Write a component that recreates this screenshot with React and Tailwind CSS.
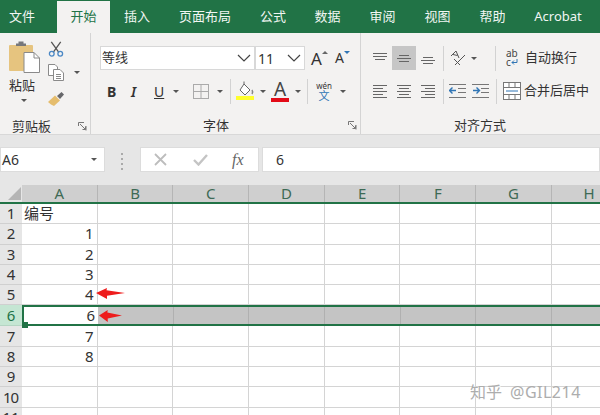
import React from "react";

const tabs = [
  ["文件", "w-[57px] justify-start pl-[9px]"],
  ["开始", "w-[53px] justify-center"],
  ["插入", "w-[54px] justify-center"],
  ["页面布局", "w-[82px] justify-center"],
  ["公式", "w-[54px] justify-center"],
  ["数据", "w-[55px] justify-center"],
  ["审阅", "w-[55px] justify-center"],
  ["视图", "w-[55px] justify-center"],
  ["帮助", "w-[55px] justify-center"],
  ["Acrobat", "w-[76px] justify-center"],
];
const columns = ["A", "B", "C", "D", "E", "F", "G", "H"];
const values = ["编号", "1", "2", "3", "4", "6", "7", "8", "", "", ""];

const Caret = ({ className = "" }) => (
  <span className={`inline-block w-0 h-0 border-x-[3px] border-x-transparent border-t-[3px] border-t-[#555] ${className}`} />
);

const Launcher = () => (
  <svg width="9" height="9" viewBox="0 0 9 9" fill="none" stroke="#777" strokeWidth="1">
    <path d="M8 4V8.500M.5 4V.5H6M2 2L7.500 7.500M4.500 7.500H7.500V4.500" />
  </svg>
);

const Divider = ({ className = "" }) => <div className={`w-px h-[25px] shrink-0 bg-[#d2d2d2] ${className}`} />;

const Lines = ({ rows, color = "#666" }) => (
  <svg width="16" height="16" viewBox="0 0 16 16" stroke={color} strokeWidth="1">
    {rows.map(([x1, x2, y]) => (
      <line key={y} x1={x1} x2={x2} y1={y + 0.5} y2={y + 0.5} />
    ))}
  </svg>
);

const Paste = () => (
  <svg width="33" height="34" viewBox="0 0 33 34">
    <rect x="0" y="4" width="24" height="26" rx="1" fill="#e6c47f" />
    <path d="M7 5V2.500H9.500V0.500H14.500V2.500H17V5Z" fill="#77787b" />
    <path d="M15 11.500H25L30.500 17V31.500H15Z" fill="#fff" stroke="#8a8a8a" />
    <path d="M25 11.500V17H30.500" fill="none" stroke="#8a8a8a" />
  </svg>
);

const Scissors = () => (
  <svg width="16" height="17" viewBox="0 0 16 17" fill="none">
    <path d="M3 1L11 12M13 1L5 12" stroke="#555" strokeWidth="1.400" />
    <circle cx="3.500" cy="13.500" r="2.500" stroke="#4b88c5" strokeWidth="1.400" />
    <circle cx="12.500" cy="13.500" r="2.500" stroke="#4b88c5" strokeWidth="1.400" />
  </svg>
);

const Copy = () => (
  <svg width="16" height="17" viewBox="0 0 16 17" fill="#fff" stroke="#8a8a8a">
    <path d="M.5 .5H7L9.500 3V11.500H.5Z" />
    <path d="M5.500 5.500H12L15.500 9V16.500H5.500Z" />
    <path d="M8 10.500H13M8 12.500H13M8 14.500H13" />
  </svg>
);

const Brush = () => (
  <svg width="17" height="16" viewBox="0 0 17 16">
    <path d="M9 5L13.500 1L16 3.500L12 8Z" fill="#66676a" />
    <path d="M0 11L7 4.500L12 9.500L6 15C4 14 2 13 0 11Z" fill="#e5bd6d" />
  </svg>
);

const FillColor = () => (
  <svg width="20" height="20" viewBox="0 0 20 20" fill="none">
    <path d="M9 3L15 9L10 14L5 9Z" fill="#fff" stroke="#666" />
    <path d="M9 3V0.500" stroke="#666" />
    <path d="M17 9C18 10.500 18 11.500 17 13" stroke="#888" strokeWidth="1.500" />
    <rect x="1" y="15" width="18" height="4" fill="#ffff2e" />
  </svg>
);

const FontColor = () => (
  <div className="w-[18px] flex flex-col items-center">
    <span className="text-[19px] leading-[16px] text-[#444]">A</span>
    <span className="w-[18px] h-[4px] mt-[1px] bg-[#e30b17]" />
  </div>
);

const Orientation = () => (
  <svg width="16" height="16" viewBox="0 0 16 16" fill="none" stroke="#555">
    <path d="M1 6L6 1L9 8M3 4.500L7.500 5.500" />
    <path d="M5 15L15 5M4 9L10 15" />
  </svg>
);

const Indent = ({ flip }) => (
  <svg width="17" height="16" viewBox="0 0 17 16" fill="none">
    <path d="M0 1.500H17M9 5.500H17M9 9.500H17M0 14.500H17" stroke="#777" />
    <path d={flip ? "M1 7.500H7M4.500 4.500L7.500 7.500L4.500 10.500" : "M7 7.500H1M3.500 4.500L.5 7.500L3.500 10.500"} stroke="#2f75b5" strokeWidth="1.400" />
  </svg>
);

const Wrap = () => (
  <div className="w-[14px] text-[10px] leading-[9px] text-[#444] flex flex-col">
    <span>ab</span>
    <span className="flex items-center">
      c
      <svg width="7" height="7" viewBox="0 0 7 7" fill="none" stroke="#2f75b5">
        <path d="M6 0V3.500H1M3 1.500L1 3.500L3 5.500" />
      </svg>
    </span>
  </div>
);

const Merge = () => (
  <svg width="18" height="18" viewBox="0 0 18 18" fill="#fff" stroke="#777">
    <rect x=".5" y=".5" width="17" height="17" />
    <path d="M.5 5.500H17.500M.5 12.500H17.500M6 .5V5.500M12 .5V5.500M6 12.500V17.500M12 12.500V17.500" />
    <path d="M3 9H15" stroke="#2f75b5" />
  </svg>
);

const Cross = () => (
  <svg width="13" height="13" viewBox="0 0 13 13" stroke="#bdbdbd" strokeWidth="1.800">
    <path d="M1 1L12 12M12 1L1 12" />
  </svg>
);

const Check = () => (
  <svg width="15" height="12" viewBox="0 0 15 12" fill="none" stroke="#c4c4c4" strokeWidth="2.400">
    <path d="M1 6L5.500 10.500L14 1" />
  </svg>
);

const Arrow = ({ className }) => (
  <svg className={`absolute ${className}`} viewBox="0 0 29 12" fill="#ee1c1c" preserveAspectRatio="none">
    <path d="M0 5.500L11 0L10.500 2.500L29 5.500L11 8.500L11 12Z" />
  </svg>
);

function Ribbon() {
  return (
    <div className="h-[102px] flex bg-[#f3f2f1] text-[#333] border-b border-[#d8d8d8]">
      {/* clipboard */}
      <div className="w-[91px] shrink-0 flex flex-col border-r border-[#d4d4d4]">
        <div className="flex h-[74px] pl-[9px] pt-[8px]">
          <div className="w-[39px] flex flex-col items-start">
            <Paste />
            <span className="text-[13px] leading-[18px] mt-[1px]">粘贴</span>
            <Caret className="ml-[12px] mt-[5px]" />
          </div>
          <div className="flex flex-col">
            <Scissors />
            <div className="flex items-center gap-[10px] mt-[7px]">
              <Copy />
              <Caret />
            </div>
            <div className="mt-[10px]"><Brush /></div>
          </div>
        </div>
        <div className="flex items-center justify-between pl-[12px] pr-[3px] text-[13px] leading-[18px] mt-[10px]">
          <span>剪贴板</span>
          <Launcher />
        </div>
      </div>

      {/* font */}
      <div className="w-[270px] shrink-0 flex flex-col border-r border-[#d4d4d4] pl-[9px]">
        <div className="flex items-center mt-[13px] h-[24px]">
          <div className="w-[155px] h-[24px] bg-white border border-[#d8d8d8] flex items-center justify-between px-[1px] pr-[3px] text-[13px]">
            <span>等线</span>
            <svg width="14" height="8" viewBox="0 0 14 8" fill="none" stroke="#444" strokeWidth="1.200"><path d="M1 1L7 7L13 1" /></svg>
          </div>
          <div className="w-[50px] h-[24px] bg-white border border-[#d8d8d8] flex items-center justify-between px-[2px] pr-[3px] text-[14px]">
            <span>11</span>
            <svg width="14" height="8" viewBox="0 0 14 8" fill="none" stroke="#444" strokeWidth="1.200"><path d="M1 1L7 7L13 1" /></svg>
          </div>
          <span className="ml-[6px] text-[17px] leading-none">A</span>
          <span className="mb-[12px] w-0 h-0 border-x-[3px] border-x-transparent border-b-[3px] border-b-[#666]" />
          <span className="ml-[7px] text-[14px] leading-none">A</span>
          <span className="mb-[12px] w-0 h-0 border-x-[3px] border-x-transparent border-t-[3px] border-t-[#2f75b5]" />
        </div>
        <div className="flex items-center h-[30px] mt-[6px] pl-[7px]">
          <span className="w-[24px] font-bold text-[14px]">B</span>
          <span className="w-[23px] italic text-[14px] font-semibold">I</span>
          <span className="w-[19px] underline text-[14px]">U</span>
          <Caret />
          <svg className="ml-[14px]" width="16" height="15" viewBox="0 0 16 15" fill="none" stroke="#aaa">
            <rect x=".5" y=".5" width="15" height="14" />
            <path d="M8 .5V14.500M.5 7.500H15.500" />
          </svg>
          <Caret className="ml-[8px]" />
          <Divider className="ml-[7px]" />
          <div className="ml-[4px]"><FillColor /></div>
          <Caret className="ml-[5px]" />
          <div className="ml-[5px]"><FontColor /></div>
          <Caret className="ml-[6px]" />
          <Divider className="ml-[6px]" />
          <div className="ml-[7px] w-[18px] flex flex-col items-center text-[8px] leading-[9px]">
            <span>wén</span>
            <span className="text-[#2f75b5] text-[11px] leading-[11px]">文</span>
          </div>
          <Caret className="ml-[7px]" />
        </div>
        <div className="flex items-center text-[13px] leading-[18px] mt-[10px] pr-[3px]">
          <span className="ml-[103px]">字体</span>
          <span className="ml-auto"><Launcher /></span>
        </div>
      </div>

      {/* alignment */}
      <div className="flex-1 flex flex-col pl-[7px]">
        <div className="flex items-center h-[24px] mt-[13px]">
          <div className="w-[24px] flex justify-center"><Lines rows={[[1, 15, 3], [1, 15, 6], [3, 13, 9]]} /></div>
          <div className="w-[24px] h-[24px] bg-[#c6c6c6] flex items-center justify-center"><Lines rows={[[3, 13, 5], [1, 15, 8], [3, 13, 11]]} /></div>
          <div className="w-[24px] flex justify-center"><Lines rows={[[3, 13, 7], [1, 15, 10], [3, 13, 13]]} /></div>
          <Divider className="ml-[3px]" />
          <div className="ml-[6px]"><Orientation /></div>
          <Caret className="ml-[5px]" />
          <Divider className="ml-[18px]" />
          <div className="ml-[10px]"><Wrap /></div>
          <span className="ml-[5px] text-[13px] whitespace-nowrap">自动换行</span>
        </div>
        <div className="flex items-center h-[30px] mt-[6px]">
          <div className="w-[24px] flex justify-center"><Lines rows={[[1, 15, 2], [1, 11, 5], [1, 15, 8], [1, 11, 11], [1, 15, 14]]} /></div>
          <div className="w-[24px] flex justify-center"><Lines rows={[[1, 15, 2], [3, 13, 5], [1, 15, 8], [3, 13, 11], [1, 15, 14]]} /></div>
          <div className="w-[24px] flex justify-center"><Lines rows={[[1, 15, 2], [5, 15, 5], [1, 15, 8], [5, 15, 11], [1, 15, 14]]} /></div>
          <Divider className="ml-[3px]" />
          <div className="ml-[5px]"><Indent /></div>
          <div className="ml-[6px]"><Indent flip /></div>
          <Divider className="ml-[7px]" />
          <div className="ml-[6px]"><Merge /></div>
          <span className="ml-[3px] text-[13px] whitespace-nowrap">合并后居中</span>
        </div>
        <div className="text-[13px] leading-[18px] mt-[10px] ml-[86px]">对齐方式</div>
      </div>
    </div>
  );
}

function FormulaBar() {
  return (
    <div className="h-[50px] bg-[#e6e6e6] flex items-start pt-[12px]">
      <div className="w-[105px] h-[25px] bg-white border border-[#dcdcdc] flex items-center justify-between pr-[7px] text-[14px] text-[#333]">
        <span className="ml-[1px]">A6</span>
        <Caret />
      </div>
      <div className="ml-[16px] mt-[6px] flex flex-col gap-[3px]">
        <span className="w-[2px] h-[2px] bg-[#aaa]" />
        <span className="w-[2px] h-[2px] bg-[#aaa]" />
        <span className="w-[2px] h-[2px] bg-[#aaa]" />
        <span className="w-[2px] h-[2px] bg-[#aaa]" />
      </div>
      <div className="ml-[17px] w-[119px] h-[25px] bg-white border border-[#dcdcdc] flex items-center pl-[13px]">
        <Cross />
        <div className="ml-[26px]"><Check /></div>
        <span className="ml-[24px] italic text-[16px] leading-none text-[#666]" style={{ fontFamily: '"Liberation Serif", serif' }}>fx</span>
      </div>
      <div className="ml-[3px] flex-1 h-[25px] bg-white border border-[#dcdcdc] flex items-center pl-[13px] text-[14px] text-[#333]">6</div>
    </div>
  );
}

function Sheet() {
  return (
    <div className="relative">
      <div className="flex h-[19px] bg-[#cfcfcf] border-b-2 border-[#217346]">
        <div className="w-[22px] bg-[#e6e6e6] relative shrink-0 overflow-hidden">
          <span className="absolute right-[1px] bottom-[2px] w-0 h-0 border-l-[13px] border-l-transparent border-b-[13px] border-b-[#b5b5b5]" />
        </div>
        {columns.map((c) => (
          <div key={c} className="w-[75.7px] shrink-0 border-r border-[#b5b5b5] flex items-center justify-center text-[15px] leading-none text-[#3e6a55]">
            {c}
          </div>
        ))}
      </div>
      {values.map((v, i) => {
        const selected = i === 5;
        return (
          <div key={i} className={`flex ${selected ? "h-[21px]" : "h-[20.3px]"}`}>
            <div className={`w-[22px] shrink-0 border-b flex items-center justify-center text-[15px] leading-none ${selected ? "bg-[#c5e6d3] text-[#217346] border-[#b5d5c3]" : "bg-[#e6e6e6] text-[#333] border-[#d0d0d0]"} ${i === 9 ? "pr-[1px] tracking-[-1px]" : ""}`}>
              {i + 1}
            </div>
            {selected ? (
              <div className="flex-1 relative flex bg-[#c4c4c4] border-y-2 border-l-2 border-[#217346]">
                <div className="w-[74px] shrink-0 bg-white flex items-center justify-end pr-[3px] text-[15px] leading-none text-[#333]">{v}</div>
                {columns.slice(1).map((c) => (
                  <div key={c} className="w-[75.7px] shrink-0 border-r border-[#b0b0b0]" />
                ))}
                <span className="absolute left-[-2px] bottom-[-4px] w-[6px] h-[6px] bg-[#217346]" />
              </div>
            ) : (
              columns.map((c, j) => (
                <div
                  key={c}
                  className={`w-[75.7px] shrink-0 border-r border-b border-[#d4d4d4] flex items-center leading-none text-[#333] ${j === 0 && i === 0 ? "justify-start pl-[2px] text-[15px]" : "justify-end pr-[3px] text-[15px]"}`}
                >
                  {j === 0 ? v : ""}
                </div>
              ))
            )}
          </div>
        );
      })}
      <Arrow className="left-[96px] top-[103px] w-[29px] h-[11px]" />
      <Arrow className="left-[99px] top-[125px] w-[23px] h-[12px]" />
      <div className="absolute left-[470px] top-[199px] flex items-center gap-[8px] text-[16px] leading-none text-[#adadad] whitespace-nowrap [text-shadow:1px_1px_0_rgba(255,255,255,0.8)]">
        <span>知乎</span>
        <span className="tracking-[0.5px]">@GIL214</span>
      </div>
    </div>
  );
}

export default function App() {
  return (
    <div
      className="w-[600px] h-[415px] overflow-hidden bg-white"
      style={{ fontFamily: '"Noto Sans", "Noto Sans CJK SC", sans-serif' }}
    >
      <div className="h-[33px] bg-[#217346] flex items-end">
        {tabs.map(([label, width]) => (
          <div
            key={label}
            className={`${width} h-[32px] shrink-0 flex items-center text-[13px] whitespace-nowrap ${label === "开始" ? "bg-[#f3f2f1] text-[#217346]" : "text-[#f1f6f3]"}`}
          >
            {label}
          </div>
        ))}
      </div>
      <Ribbon />
      <FormulaBar />
      <Sheet />
    </div>
  );
}
